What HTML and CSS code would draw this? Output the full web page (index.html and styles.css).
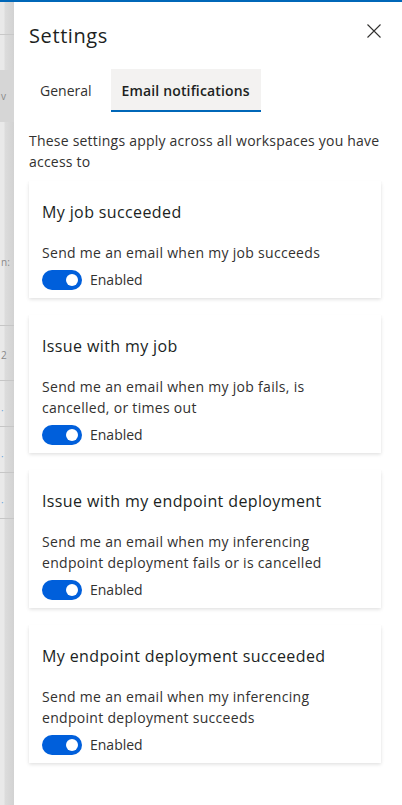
FILE: index.html
```html
<!DOCTYPE html>
<html lang="en">
<head>
<meta charset="utf-8">
<title>Settings</title>
<link rel="stylesheet" href="styles.css">
</head>
<body>
<div class="topbar"></div>
<div class="main">
  <div class="backdrop">
    <div class="bd-line bd-l1"></div>
    <div class="bd-sel"><span class="bd-txt">v</span></div>
    <div class="bd-gap1"></div>
    <div class="bd-txt bd-n">n:</div>
    <div class="bd-gap2"></div>
    <div class="bd-row bd-first">2</div>
    <div class="bd-row"><span class="bd-link">·</span></div>
    <div class="bd-row"><span class="bd-link">·</span></div>
    <div class="bd-row"><span class="bd-link">·</span></div>
    <div class="bd-row"></div>
  </div>
  <div class="panel">
    <div class="header">
      <h1 class="title">Settings</h1>
      <button class="close" aria-label="Close">
        <svg width="14" height="14" viewBox="0 0 14 14"><path d="M0.5 0.5 L13.5 13.5 M13.5 0.5 L0.5 13.5" stroke="#323130" stroke-width="1.1" fill="none"/></svg>
      </button>
    </div>
    <div class="tabs">
      <div class="tab">General</div>
      <div class="tab active">Email notifications</div>
    </div>
    <p class="intro">These settings apply across all workspaces you have access to</p>
    <div class="cards">
      <div class="card">
        <div class="card-title">My job succeeded</div>
        <div class="card-desc">Send me an email when my job succeeds</div>
        <div class="toggle-row"><span class="toggle"><span class="knob"></span></span><span class="toggle-label">Enabled</span></div>
      </div>
      <div class="card">
        <div class="card-title">Issue with my job</div>
        <div class="card-desc">Send me an email when my job fails, is cancelled, or times out</div>
        <div class="toggle-row"><span class="toggle"><span class="knob"></span></span><span class="toggle-label">Enabled</span></div>
      </div>
      <div class="card">
        <div class="card-title">Issue with my endpoint deployment</div>
        <div class="card-desc">Send me an email when my inferencing endpoint deployment fails or is cancelled</div>
        <div class="toggle-row"><span class="toggle"><span class="knob"></span></span><span class="toggle-label">Enabled</span></div>
      </div>
      <div class="card">
        <div class="card-title">My endpoint deployment succeeded</div>
        <div class="card-desc">Send me an email when my inferencing endpoint deployment succeeds</div>
        <div class="toggle-row"><span class="toggle"><span class="knob"></span></span><span class="toggle-label">Enabled</span></div>
      </div>
    </div>
  </div>
</div>
</body>
</html>
```
FILE: styles.css
```css
* { box-sizing: border-box; }
html, body { margin: 0; padding: 0; }
body {
  width: 402px;
  height: 805px;
  overflow: hidden;
  display: flex;
  flex-direction: column;
  font-family: "Open Sans", "Noto Sans", sans-serif;
  color: #323130;
  background: #fff;
}
.topbar { height: 2px; background: #0067b8; flex: none; }
.main { flex: 1; display: flex; min-height: 0; }
.backdrop {
  width: 14px;
  flex: none;
  background: linear-gradient(to right, #e9e9e9 0, #e9e9e9 4px, #dcdcdc 5px, #d2d2d2 14px);
  display: flex;
  flex-direction: column;
  overflow: hidden;
}
.bd-line { height: 1px; background: #c8c8c8; margin-top: 32px; flex: none; }
.bd-sel { height: 52px; margin-top: 35px; background: #d6d6d6; display: flex; align-items: center; flex: none; }
.bd-txt { font-size: 10px; color: #8a8a8a; line-height: 14px; padding-left: 1px; }
.bd-gap1 { height: 133px; flex: none; }
.bd-gap2 { height: 56px; flex: none; }
.bd-row {
  height: 46px;
  flex: none;
  border-top: 1px solid #c6c6c6;
  font-size: 10px;
  line-height: 14px;
  color: #8a8a8a;
  padding: 22px 0 0 1px;
}
.bd-row.bd-first { height: 55px; padding-top: 22px; }
.bd-link { color: #6aa6d8; }
.panel {
  flex: 1;
  background: #fff;
  padding: 0 21px 0 15px;
  display: flex;
  flex-direction: column;
}
.header {
  display: flex;
  justify-content: space-between;
  align-items: flex-start;
  padding-top: 20px;
}
.title {
  margin: 0;
  font-size: 20px;
  font-weight: 400;
  line-height: 28px;
  letter-spacing: 0.6px;
  color: #201f1e;
}
.close {
  border: none;
  background: none;
  padding: 0;
  margin: 2px 0 0 0;
  width: 14px;
  height: 14px;
  display: flex;
}
.tabs {
  display: flex;
  gap: 8px;
  margin-top: 19px;
}
.tab {
  height: 43px;
  padding: 0 11px;
  display: flex;
  align-items: center;
  font-size: 14px;
  color: #323130;
}
.tab.active {
  background: #f3f2f1;
  font-weight: 600;
  letter-spacing: 0.15px;
  border-bottom: 2px solid #0067b8;
  padding-top: 2px;
  color: #201f1e;
}
.intro {
  margin: 18px 0 0 0;
  font-size: 14px;
  line-height: 21px;
  letter-spacing: 0.22px;
}
.cards {
  display: flex;
  flex-direction: column;
  gap: 17px;
  margin-top: 9px;
}
.card {
  background: #fff;
  padding: 20px 13px 8px 13px;
  box-shadow: 0 1.6px 3.6px rgba(0,0,0,0.13), 0 0.3px 0.9px rgba(0,0,0,0.11);
}
.card-title {
  font-size: 16px;
  line-height: 22px;
  letter-spacing: 0.38px;
  color: #201f1e;
}
.card-desc {
  margin-top: 19px;
  font-size: 14px;
  line-height: 21px;
  letter-spacing: 0.3px;
}
.toggle-row {
  display: flex;
  align-items: center;
  gap: 8px;
  margin-top: 7px;
  height: 20px;
}
.toggle {
  width: 40px;
  height: 20px;
  border-radius: 10px;
  background: #005fdb;
  display: flex;
  align-items: center;
  justify-content: flex-end;
  padding-right: 4px;
  flex: none;
}
.knob {
  width: 12px;
  height: 12px;
  border-radius: 50%;
  background: #fff;
}
.toggle-label { font-size: 14px; line-height: 20px; }
```
